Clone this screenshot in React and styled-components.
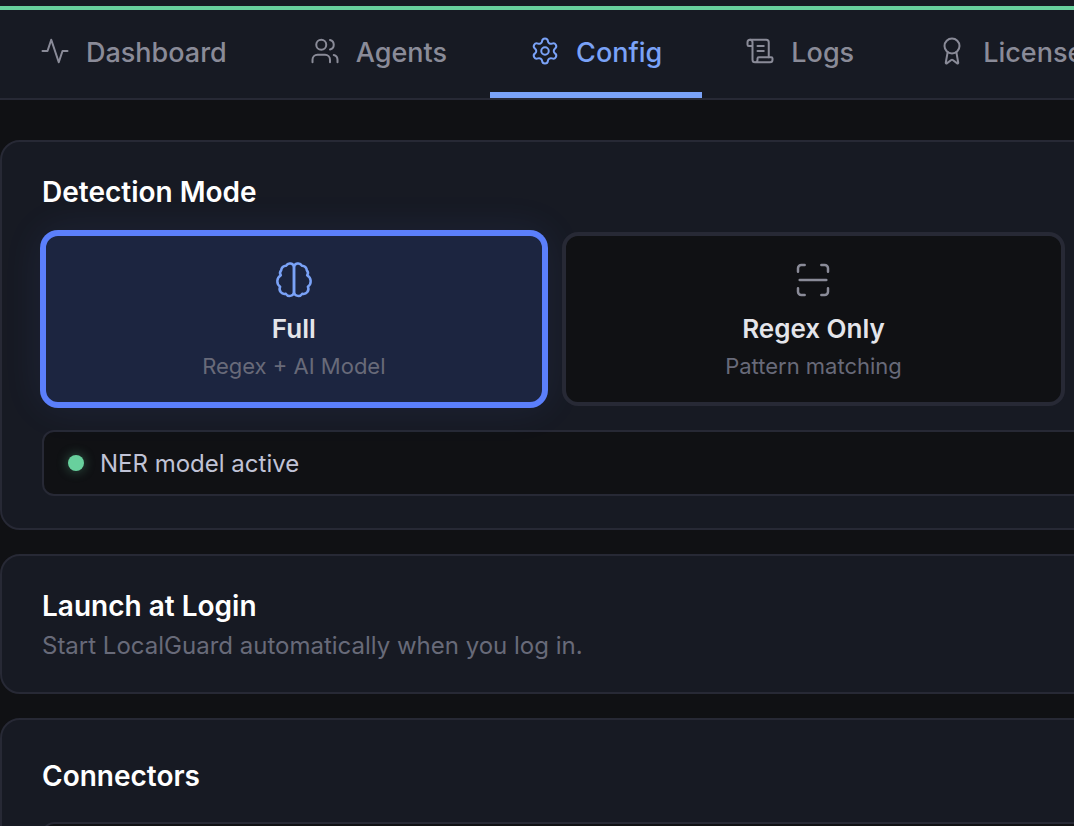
import React, { useState } from 'react'
import styled, { createGlobalStyle } from 'styled-components'
import { Users, Settings, ScrollText, Award } from 'lucide-react'

const colors = {
  page: '#101114',
  panel: '#171a23',
  border: '#272935',
  green: '#68d09d',
  blue: '#7aa2f7',
  ring: '#5b7ffb',
  selected: '#1c2540',
  white: '#ffffff',
  bright: '#e4e5ea',
  soft: '#c0c3d6',
  muted: '#8a8b98',
  dim: '#686a79'
}

const PulseIcon = () => (
  <svg
    width="30"
    height="30"
    viewBox="0 0 24 24"
    fill="none"
    stroke="currentColor"
    strokeWidth="1.6"
    strokeLinecap="round"
    strokeLinejoin="round"
    aria-hidden="true"
  >
    <path d="M22 12h-4l-3 9L9 3l-3 9H2" />
  </svg>
)

const BRAIN_HALF =
  'M12 4.3a2.5 2.5 0 0 0-4.7-.9 2.9 2.9 0 0 0-3 2.8 2.4 2.4 0 0 0-.2 3A4 4 0 0 0 3.7 16a3 3 0 0 0 3.4 4.3 2.7 2.7 0 0 0 4.9-.8Z'

const BrainIcon = () => (
  <svg viewBox="0 0 24 24" aria-hidden="true">
    <path d={BRAIN_HALF} />
    <path d={BRAIN_HALF} transform="matrix(-1 0 0 1 24 0)" />
  </svg>
)

const ScanIcon = () => (
  <svg viewBox="0 0 24 24" aria-hidden="true">
    <path d="M3 7V5a2 2 0 0 1 2-2h2" />
    <path d="M17 3h2a2 2 0 0 1 2 2v2" />
    <path d="M21 17v2a2 2 0 0 1-2 2h-2" />
    <path d="M7 21H5a2 2 0 0 1-2-2v-2" />
    <path d="M4 12h16" />
  </svg>
)

const tabs = [
  { id: 'dashboard', label: 'Dashboard', Icon: PulseIcon },
  { id: 'agents', label: 'Agents', Icon: Users },
  { id: 'config', label: 'Config', Icon: Settings },
  { id: 'logs', label: 'Logs', Icon: ScrollText },
  { id: 'license', label: 'License', Icon: Award }
]

const modes = [
  { id: 'full', title: 'Full', text: 'Regex + AI Model', Icon: BrainIcon },
  { id: 'regex', title: 'Regex Only', text: 'Pattern matching', Icon: ScanIcon }
]

const App = () => {
  const [tab, setTab] = useState('config')
  const [mode, setMode] = useState('full')

  return (
    <Page>
      <GlobalStyle />
      <Header>
        <Nav>
          {tabs.map(({ id, label, Icon }) => (
            <Tab key={id} type="button" $active={tab === id} onClick={() => setTab(id)}>
              <Icon size={30} strokeWidth={1.6} />
              <TabLabel>{label}</TabLabel>
            </Tab>
          ))}
        </Nav>
      </Header>

      <Main>
        <Card>
          <Title>Detection Mode</Title>
          <Modes>
            {modes.map(({ id, title, text, Icon }) => (
              <Mode
                key={id}
                type="button"
                aria-pressed={mode === id}
                $active={mode === id}
                onClick={() => setMode(id)}
              >
                <Icon />
                <ModeTitle>{title}</ModeTitle>
                <ModeText>{text}</ModeText>
              </Mode>
            ))}
          </Modes>
          <Status>
            <Dot />
            <StatusText>NER model active</StatusText>
          </Status>
        </Card>

        <Card>
          <Title>Launch at Login</Title>
          <Description>Start LocalGuard automatically when you log in.</Description>
        </Card>

        <Card>
          <CardHeader>
            <Title>Connectors</Title>
          </CardHeader>
          <List />
        </Card>
      </Main>
    </Page>
  )
}

export default App

const GlobalStyle = createGlobalStyle`
  * {
    box-sizing: border-box;
  }

  body {
    margin: 0;
    background: ${colors.page};
    font-family: Inter, "Liberation Sans", sans-serif;
  }
`

const Page = styled.div`
  height: 100vh;
  overflow: hidden;
  color: ${colors.bright};
`

const Header = styled.header`
  padding-top: 6px;
  background: ${colors.panel};
  border-bottom: 2px solid ${colors.border};
`

const Nav = styled.nav`
  display: flex;
  gap: 3px;
  border-top: 4px solid ${colors.green};
`

const Tab = styled.button`
  display: flex;
  flex-shrink: 0;
  align-items: center;
  gap: 16px;
  height: 88px;
  padding: 0 40px;
  border: 0;
  border-bottom: 6px solid ${p => (p.$active ? colors.blue : 'transparent')};
  background: none;
  color: ${p => (p.$active ? colors.blue : colors.muted)};
  font: 500 27px/36px Inter, "Liberation Sans", sans-serif;
  white-space: nowrap;
  cursor: pointer;
`

const TabLabel = styled.span`
  padding-top: 4px;
`

/* wider than the window, the panels run on past its right edge */
const Main = styled.main`
  display: flex;
  flex-direction: column;
  gap: 24px;
  width: calc(150% + 16px);
  padding-top: 40px;
`

const Card = styled.section`
  padding: 32px 40px;
  border: 2px solid ${colors.border};
  border-radius: 20px;
  background: ${colors.panel};
`

const CardHeader = styled.div`
  display: flex;
  align-items: center;
  min-height: 48px;
`

const Title = styled.h2`
  margin: 0;
  color: ${colors.white};
  font-size: 28px;
  font-weight: 600;
  line-height: 36px;
`

const Description = styled.p`
  margin: 8px 0 0;
  color: ${colors.dim};
  font-size: 24px;
  line-height: 28px;
`

const Modes = styled.div`
  display: grid;
  grid-template-columns: repeat(3, 1fr);
  gap: 16px;
  margin-top: 22px;
`

const Mode = styled.button`
  display: flex;
  flex-direction: column;
  align-items: center;
  padding: 24px 24px 22px;
  border: 4px solid ${p => (p.$active ? colors.ring : colors.border)};
  border-radius: 16px;
  background: ${p => (p.$active ? colors.selected : colors.page)};
  box-shadow: ${p => (p.$active ? `0 0 0 2px ${colors.ring}, 0 0 40px rgba(91, 127, 251, 0.1)` : 'none')};
  color: ${colors.bright};
  font-family: inherit;
  cursor: pointer;

  svg {
    width: 40px;
    height: 40px;
    fill: none;
    stroke: ${p => (p.$active ? colors.blue : colors.muted)};
    stroke-width: 1.5;
    stroke-linecap: round;
    stroke-linejoin: round;
  }
`

const ModeTitle = styled.span`
  margin-top: 12px;
  font-size: 26px;
  font-weight: 600;
  line-height: 34px;
`

const ModeText = styled.span`
  margin-top: 6px;
  color: ${colors.dim};
  font-size: 22px;
  line-height: 28px;
`

const Status = styled.div`
  display: flex;
  align-items: center;
  gap: 16px;
  margin-top: 24px;
  padding: 15px 24px;
  border: 2px solid ${colors.border};
  border-radius: 12px;
  background: ${colors.page};
`

const StatusText = styled.span`
  padding-top: 2px;
  color: ${colors.soft};
  font-size: 24px;
  line-height: 30px;
`

const Dot = styled.span`
  width: 16px;
  height: 16px;
  border-radius: 50%;
  background: ${colors.green};
  box-shadow: 0 0 12px rgba(104, 208, 157, 0.4);
`

const List = styled.div`
  min-height: 120px;
  margin-top: 22px;
  border: 2px solid ${colors.border};
  border-radius: 12px;
  background: ${colors.page};
`
